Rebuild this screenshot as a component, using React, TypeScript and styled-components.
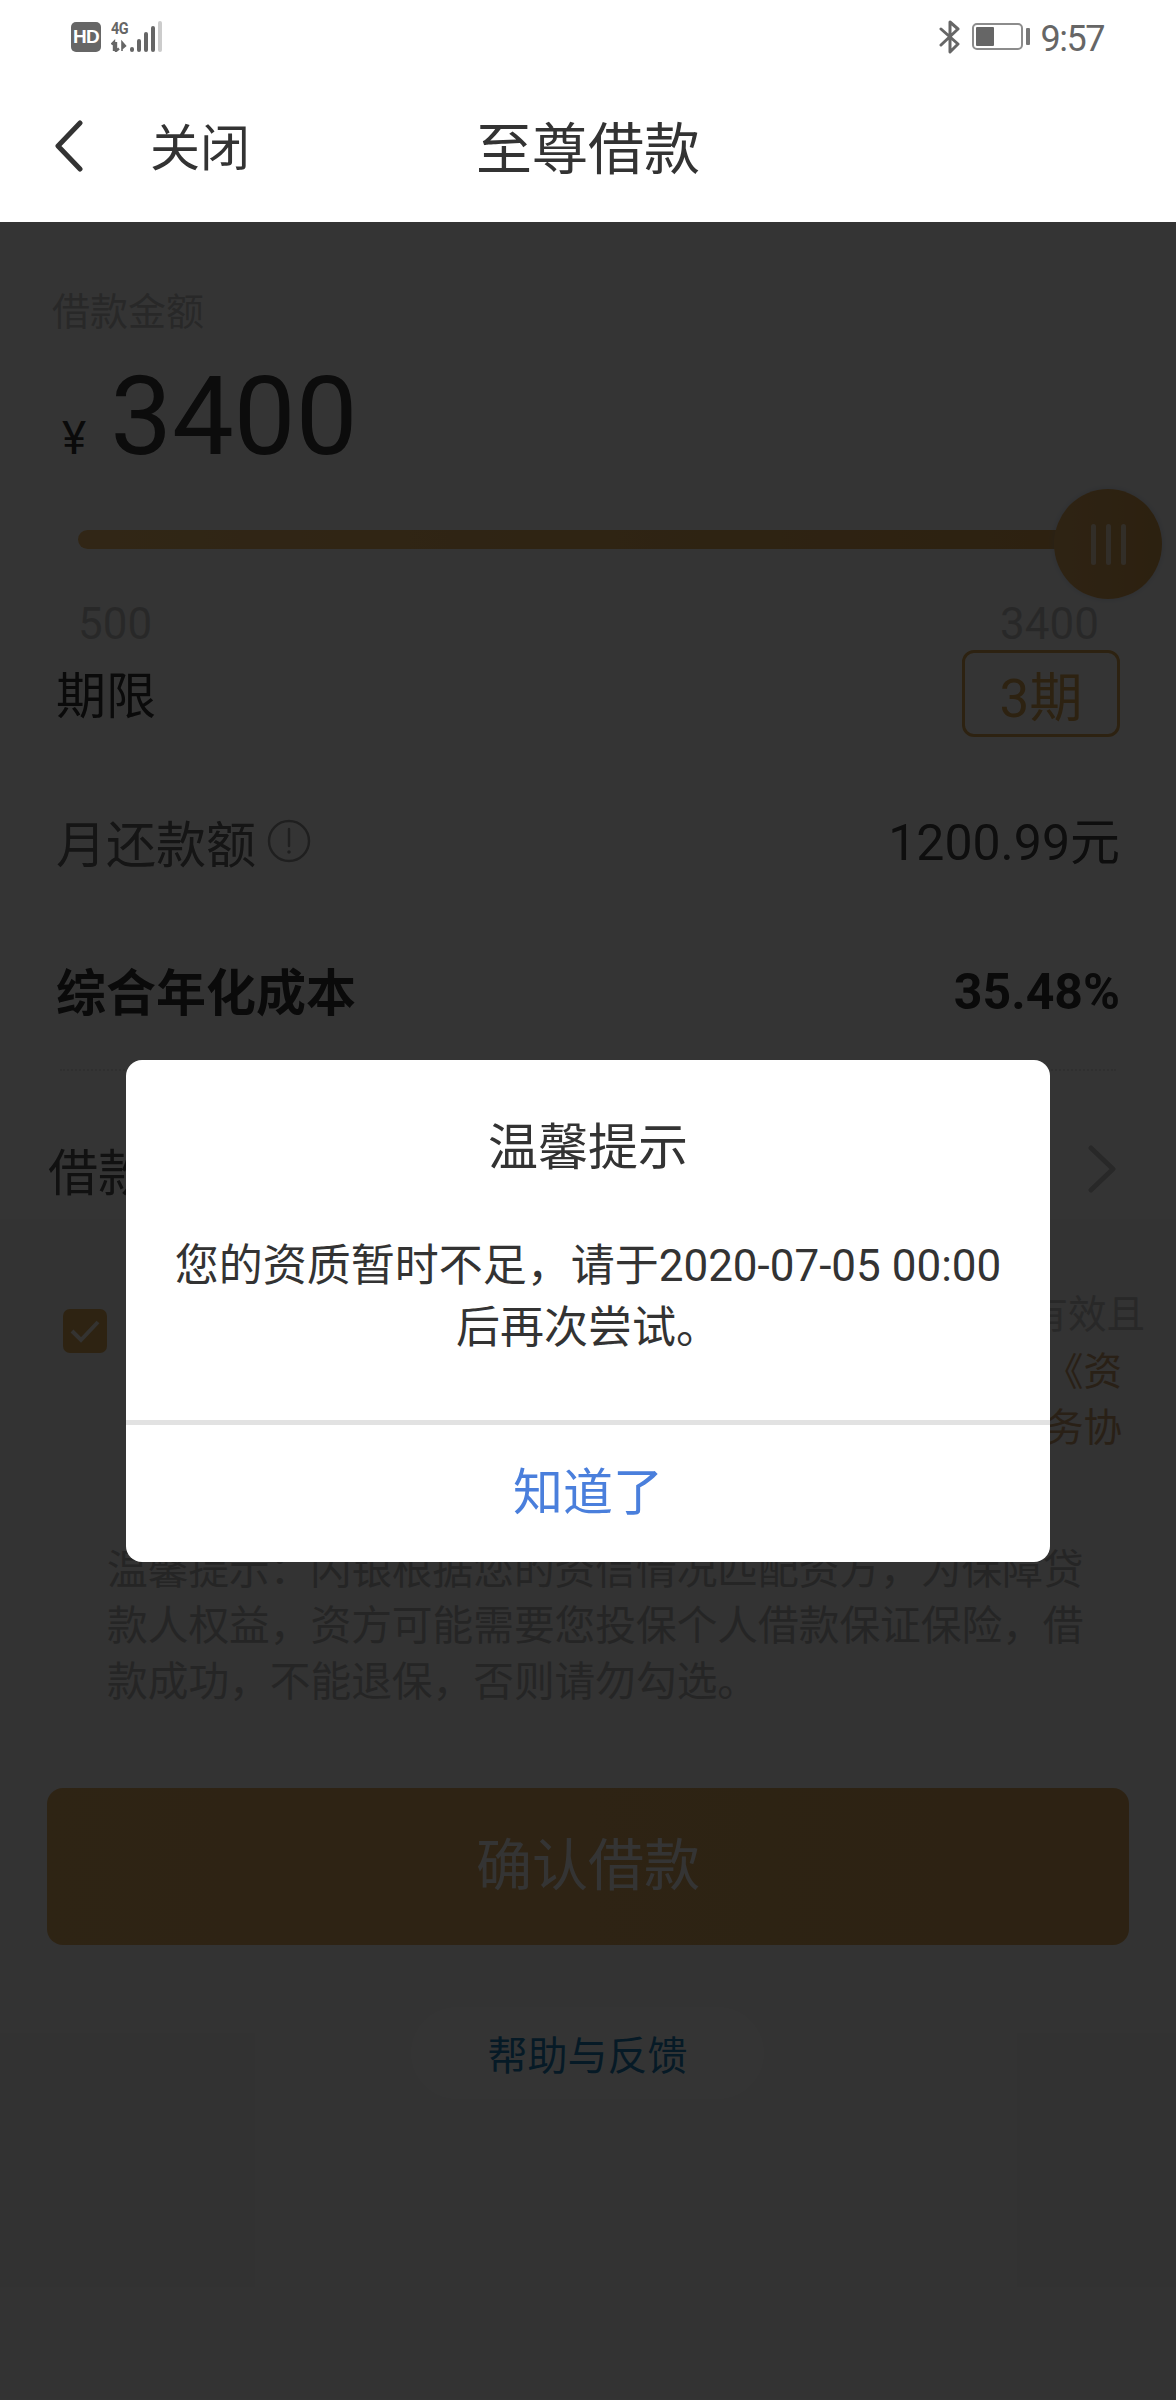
import styled, { createGlobalStyle } from "styled-components"

const GlobalStyle = createGlobalStyle`
  html, body {
    margin: 0;
    padding: 0;
    background: #fff;
  }
  body {
    font-family: Roboto, "Noto Sans CJK SC", sans-serif;
  }
`

const Screen = styled.div`
  position: relative;
  width: 1176px;
  height: 2400px;
  overflow: hidden;
  background: #fff;
  color: #333;
`

/* status bar */
const StatusBar = styled.div`
  height: 70px;
  display: flex;
  justify-content: space-between;
  align-items: flex-start;
  padding: 20px 72px 0 71px;
  box-sizing: border-box;
`
const StatusGroup = styled.div`
  display: flex;
  align-items: flex-start;
`
const HdBadge = styled.div`
  width: 30px;
  height: 30px;
  margin-top: 2px;
  border-radius: 5px;
  background: #666;
  color: #fff;
  font-family: "Liberation Sans", sans-serif;
  font-size: 19px;
  font-weight: 700;
  line-height: 30px;
  letter-spacing: -0.8px;
  text-align: center;
`
const SignalWrap = styled.div`
  position: relative;
  width: 52px;
  height: 32px;
  margin-left: 10px;
`
const FourG = styled.span`
  position: absolute;
  left: 0;
  top: -1px;
  font-family: Roboto, sans-serif;
  font-size: 17px;
  font-weight: 700;
  line-height: 18px;
  color: #666;
  letter-spacing: -0.5px;
  transform: scaleX(0.85);
  transform-origin: left center;
`
const Battery = styled.div`
  width: 51px;
  height: 27px;
  margin: 3px 0 0 11px;
  border: 2px solid #8c8c8c;
  border-radius: 5px;
  padding: 2px;
  box-sizing: border-box;
`
const BatteryFill = styled.div`
  width: 18px;
  height: 100%;
  background: #666;
  border-radius: 1px;
`
const BatteryCap = styled.div`
  width: 4px;
  height: 17px;
  margin: 8px 0 0 3px;
  background: #777;
  border-radius: 1px;
`
const Clock = styled.div`
  margin-left: 11px;
  font-size: 36px;
  line-height: 38px;
  letter-spacing: -1.5px;
  color: #666;
`

/* nav */
const NavBar = styled.div`
  height: 152px;
  display: grid;
  grid-template-columns: 1fr auto 1fr;
  align-items: center;
  padding: 0 54px;
  box-sizing: border-box;
`
const NavLeft = styled.div`
  display: flex;
  align-items: center;
  gap: 66px;
`
const CloseLabel = styled.span`
  margin-top: 6px;
  font-size: 50px;
  line-height: 60px;
  color: #333;
`
const NavTitle = styled.div`
  margin-top: 8px;
  font-size: 56px;
  line-height: 66px;
  color: #333;
`

/* amount */
const AmountSection = styled.section`
  padding: 65px 0 0 52px;
`
const AmountLabel = styled.div`
  font-size: 38px;
  line-height: 50px;
  color: #c4c4c4;
`
const AmountRow = styled.div`
  display: flex;
  align-items: baseline;
  gap: 24px;
  margin: 25px 0 0 10px;
  color: #333;
`
const Currency = styled.span`
  font-size: 46px;
`
const AmountValue = styled.span`
  font-size: 110px;
  line-height: 110px;
  color: #3a3a3a;
`

const SliderBox = styled.div`
  position: relative;
  height: 108px;
  margin: 17px 0 0 78px;
  display: flex;
  align-items: center;
`
const Track = styled.div`
  width: 1030px;
  height: 19px;
  margin-top: -8px;
  border-radius: 10px;
  background: linear-gradient(90deg, #eebb6c, #dba250);
`
const Thumb = styled.div`
  position: absolute;
  left: 976px;
  top: 0;
  width: 108px;
  height: 110px;
  border-radius: 50%;
  background: linear-gradient(90deg, #e2ac60, #d8a04e);
  box-shadow: 0 0 6px rgba(120, 150, 200, 0.35);
  display: flex;
  justify-content: center;
  align-items: center;
  gap: 10px;
`
const ThumbBar = styled.i`
  display: block;
  width: 5px;
  height: 41px;
  border-radius: 3px;
  background: rgba(255, 255, 255, 0.65);
`
const ScaleRow = styled.div`
  display: flex;
  justify-content: space-between;
  margin: 5px 77px 0 78px;
  font-size: 44px;
  line-height: 44px;
  color: #c6c6c6;
`

/* rows */
const InfoRow = styled.div<{ $top: number; $height: number }>`
  display: flex;
  justify-content: space-between;
  align-items: center;
  height: ${p => p.$height}px;
  margin-top: ${p => p.$top}px;
  padding: 0 56px;
  font-size: 50px;
  color: #555;
`
const RowLabel = styled.div<{ $strong?: boolean; $dark?: boolean }>`
  display: flex;
  align-items: center;
  gap: 11px;
  margin-bottom: ${p => (p.$dark ? 4 : 0)}px;
  font-weight: ${p => (p.$strong ? 700 : 400)};
  color: ${p => (p.$strong || p.$dark ? "#333" : "#666")};
`
const RowValue = styled.div<{ $strong?: boolean }>`
  margin: ${p => (p.$strong ? "6px 0 0" : "0 0 6px")};
  font-weight: ${p => (p.$strong ? 700 : 400)};
  color: ${p => (p.$strong ? "#333" : "#444")};
`
const TermBox = styled.div`
  width: 158px;
  height: 87px;
  box-sizing: border-box;
  border: 3px solid #dca654;
  border-radius: 12px;
  color: #dca654;
  font-size: 53px;
  display: flex;
  justify-content: center;
  align-items: center;
`
const DottedLine = styled.div`
  margin: 30px 60px 0;
  border-top: 2px dotted #e4e4e4;
`
const LoanRow = styled.div`
  display: flex;
  justify-content: space-between;
  align-items: center;
  height: 100px;
  margin-top: 48px;
  padding: 0 60px 0 48px;
  font-size: 50px;
  color: #555;
`

/* lower part of the page, a touch greyer than the top */
const LowerSection = styled.div`
  height: 1180px;
  overflow: hidden;
  background: #f7f7f7;
`

/* agreement */
const AgreeRow = styled.div`
  display: flex;
  justify-content: space-between;
  margin-top: 65px;
  padding: 0 31px 0 63px;
`
const Checkbox = styled.div`
  width: 44px;
  height: 44px;
  margin-top: 25px;
  border-radius: 7px;
  background: #e0aa58;
  display: flex;
  justify-content: center;
  align-items: center;
`
const AgreeLines = styled.div`
  display: flex;
  flex-direction: column;
  align-items: flex-end;
  margin-top: 3px;
  font-size: 38.5px;
  line-height: 56.5px;
`
const AgreeLine = styled.div<{ $gold?: boolean }>`
  padding-right: ${p => (p.$gold ? 23 : 0)}px;
  color: ${p => (p.$gold ? "#c89c6c" : "#c2c2c2")};
`
const Notice = styled.p`
  width: 980px;
  margin: 85px 0 0 107px;
  font-size: 40.7px;
  line-height: 56px;
  color: #b4b4b4;
`
const ConfirmButton = styled.div`
  height: 157px;
  margin: 78px 47px 0;
  padding-bottom: 12px;
  box-sizing: border-box;
  border-radius: 16px;
  background: linear-gradient(90deg, #e2ae64, #dca85e);
  color: #fff;
  font-size: 56px;
  display: flex;
  justify-content: center;
  align-items: center;
`
const HelpPill = styled.div`
  width: 353px;
  height: 92px;
  margin: 62px 0 0 411px;
  border-radius: 46px;
  background: #fff;
  color: #1f7fb8;
  font-size: 40px;
  display: flex;
  justify-content: center;
  align-items: center;
`

/* dim layer + dialog */
const Scrim = styled.div`
  position: absolute;
  left: 0;
  right: 0;
  top: 222px;
  bottom: 0;
  background: rgba(0, 0, 0, 0.795);
`
const Dialog = styled.div`
  position: absolute;
  left: 126px;
  top: 1060px;
  width: 924px;
  height: 502px;
  border-radius: 16px;
  background: #fff;
  display: flex;
  flex-direction: column;
  text-align: center;
`
const DialogBody = styled.div`
  flex: 1;
  padding-top: 58px;
`
const DialogTitle = styled.div`
  font-size: 50px;
  line-height: 60px;
  color: #333;
`
const DialogText = styled.div`
  margin-top: 57px;
  font-size: 44px;
  line-height: 62px;
  color: #333;
`
const DialogAction = styled.div`
  height: 142px;
  box-sizing: border-box;
  border-top: 5px solid #e2e2e2;
  font-size: 50px;
  line-height: 136px;
  color: #4a7fdc;
`

function SignalIcon() {
  return (
    <svg width="52" height="32" viewBox="0 0 52 32" style={{ display: "block" }}>
      <path d="M3 31V22L0.5 24.5M5 22V31L8 28.5" fill="none" stroke="#666" strokeWidth="2.4" />
      <path d="M11 31V22L14.5 26L11 29" fill="#666" stroke="#666" strokeWidth="1.6" />
      <rect x="19" y="27" width="4" height="5" rx="2" fill="#666" />
      <rect x="26" y="19" width="4" height="13" rx="2" fill="#666" />
      <rect x="33" y="12" width="4" height="20" rx="2" fill="#666" />
      <rect x="40" y="6" width="4" height="26" rx="2" fill="#666" />
      <rect x="47" y="1" width="4" height="31" rx="2" fill="#ccc" />
    </svg>
  )
}

function BluetoothIcon() {
  return (
    <svg width="22" height="34" viewBox="0 0 22 34" style={{ display: "block" }}>
      <path d="M2 9L19 24L11 32V2L19 9L2 25" fill="none" stroke="#666" strokeWidth="3" strokeLinejoin="round" strokeLinecap="round" />
    </svg>
  )
}

function BackIcon() {
  return (
    <svg width="30" height="52" viewBox="0 0 30 52" style={{ display: "block" }}>
      <path d="M26 3L4 26L26 49" fill="none" stroke="#333" strokeWidth="5" strokeLinecap="round" strokeLinejoin="round" />
    </svg>
  )
}

function ForwardIcon() {
  return (
    <svg width="28" height="48" viewBox="0 0 28 48" style={{ display: "block" }}>
      <path d="M3 3L25 24L3 45" fill="none" stroke="#c4c4c4" strokeWidth="5" strokeLinecap="round" strokeLinejoin="round" />
    </svg>
  )
}

function InfoIcon() {
  return (
    <svg width="44" height="44" viewBox="0 0 44 44" style={{ display: "block" }}>
      <circle cx="22" cy="22" r="20" fill="none" stroke="#999" strokeWidth="2.5" />
      <path d="M22 10V27" stroke="#999" strokeWidth="2.5" strokeLinecap="round" />
      <circle cx="22" cy="33" r="1.8" fill="#999" />
    </svg>
  )
}

function CheckIcon() {
  return (
    <svg width="30" height="26" viewBox="0 0 30 26" style={{ display: "block" }}>
      <path d="M2 13L11 22L28 4" fill="none" stroke="#fff" strokeOpacity="0.9" strokeWidth="4" />
    </svg>
  )
}

export default function App() {
  return (
    <Screen>
      <GlobalStyle />
      <StatusBar>
        <StatusGroup>
          <HdBadge>HD</HdBadge>
          <SignalWrap>
            <FourG>4G</FourG>
            <SignalIcon />
          </SignalWrap>
        </StatusGroup>
        <StatusGroup>
          <BluetoothIcon />
          <Battery>
            <BatteryFill />
          </Battery>
          <BatteryCap />
          <Clock>9:57</Clock>
        </StatusGroup>
      </StatusBar>

      <NavBar>
        <NavLeft>
          <BackIcon />
          <CloseLabel>关闭</CloseLabel>
        </NavLeft>
        <NavTitle>至尊借款</NavTitle>
        <div />
      </NavBar>

      <AmountSection>
        <AmountLabel>借款金额</AmountLabel>
        <AmountRow>
          <Currency>¥</Currency>
          <AmountValue>3400</AmountValue>
        </AmountRow>
      </AmountSection>

      <SliderBox>
        <Track />
        <Thumb>
          <ThumbBar />
          <ThumbBar />
          <ThumbBar />
        </Thumb>
      </SliderBox>
      <ScaleRow>
        <span>500</span>
        <span>3400</span>
      </ScaleRow>

      <InfoRow $top={4} $height={87}>
        <RowLabel $dark>期限</RowLabel>
        <TermBox>3期</TermBox>
      </InfoRow>
      <InfoRow $top={54} $height={100}>
        <RowLabel>
          月还款额
          <InfoIcon />
        </RowLabel>
        <RowValue>1200.99元</RowValue>
      </InfoRow>
      <InfoRow $top={48} $height={100}>
        <RowLabel $strong>综合年化成本</RowLabel>
        <RowValue $strong>35.48%</RowValue>
      </InfoRow>
      <DottedLine />

      <LoanRow>
        <span>借款</span>
        <ForwardIcon />
      </LoanRow>

      <LowerSection>
        <AgreeRow>
          <Checkbox>
            <CheckIcon />
          </Checkbox>
          <AgreeLines>
            <AgreeLine>有效且</AgreeLine>
            <AgreeLine $gold>《资</AgreeLine>
            <AgreeLine $gold>务协</AgreeLine>
          </AgreeLines>
        </AgreeRow>

        <Notice>
          温馨提示：闪银根据您的资信情况匹配资方，为保障贷款人权益，资方可能需要您投保个人借款保证保险，借款成功，不能退保，否则请勿勾选。
        </Notice>

        <ConfirmButton>确认借款</ConfirmButton>
        <HelpPill>帮助与反馈</HelpPill>
      </LowerSection>

      <Scrim />
      <Dialog>
        <DialogBody>
          <DialogTitle>温馨提示</DialogTitle>
          <DialogText>
            您的资质暂时不足，请于2020-07-05 00:00
            <br />
            后再次尝试。
          </DialogText>
        </DialogBody>
        <DialogAction>知道了</DialogAction>
      </Dialog>
    </Screen>
  )
}
